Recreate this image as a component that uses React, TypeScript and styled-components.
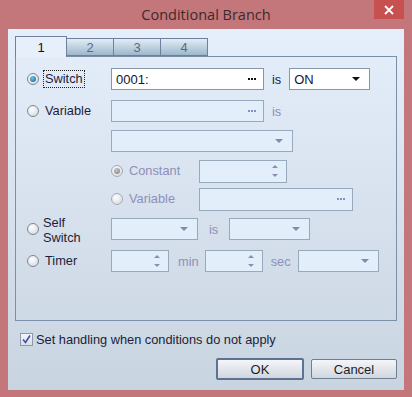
import React from 'react'
import styled, { createGlobalStyle } from 'styled-components'

const GlobalStyle = createGlobalStyle`
  html, body {
    margin: 0;
    padding: 0;
    width: 412px;
    height: 397px;
    overflow: hidden;
    background: #c4777b;
  }
  body {
    font-family: 'Liberation Sans', Arial, sans-serif;
    font-size: 12.8px;
    color: #1d1d3a;
  }
`

const Window = styled.div`
  width: 412px;
  height: 397px;
  display: flex;
  flex-direction: column;
  background: #c4777b;
`

const TitleBar = styled.div`
  height: 29px;
  position: relative;
  display: flex;
  justify-content: center;
  align-items: center;
  font-family: 'Open Sans', 'Noto Sans', sans-serif;
  font-size: 14.5px;
  color: #3a2a2c;
  padding-bottom: 1px;
  box-sizing: border-box;
`

const CloseButton = styled.div`
  position: absolute;
  right: 8px;
  top: 0;
  width: 30px;
  height: 19px;
  background: #c75050;
  display: flex;
  align-items: center;
  justify-content: center;
`

const Client = styled.div`
  margin: 0 8px 7px 8px;
  flex: 1;
  background: linear-gradient(#e5effb, #c8d4e0);
  display: flex;
  flex-direction: column;
  padding: 7px 7px 0 7px;
`

const TabStrip = styled.div`
  display: flex;
  align-items: flex-end;
  height: 20px;
  position: relative;
  z-index: 1;
`

const Tab = styled.div<{ $active?: boolean }>`
  box-sizing: border-box;
  width: ${(p) => (p.$active ? 52 : 48)}px;
  height: ${(p) => (p.$active ? 21 : 18)}px;
  margin-bottom: ${(p) => (p.$active ? -1 : 0)}px;
  margin-left: ${(p) => (p.$active ? 0 : -1)}px;
  border: 1px solid #6e809d;
  border-bottom: ${(p) => (p.$active ? 'none' : '1px solid #6e809d')};
  background: ${(p) => (p.$active ? '#e7f0fa' : 'linear-gradient(#e2ecf5, #9db8cb)')};
  color: ${(p) => (p.$active ? '#111' : '#5b6a80')};
  display: flex;
  justify-content: center;
  align-items: center;
  font-size: 13px;
  padding-top: ${(p) => (p.$active ? 0 : 1)}px;
  &:first-child {
    margin-left: 0;
  }
`

const Panel = styled.div`
  box-sizing: border-box;
  width: 382px;
  height: 265px;
  border: 1px solid #7b8fab;
  display: flex;
  flex-direction: column;
  padding: 11px 0 0 11px;
`

const Row = styled.div<{ $top: number; $indent?: number }>`
  display: flex;
  align-items: center;
  margin-top: ${(p) => p.$top}px;
  margin-left: ${(p) => p.$indent || 0}px;
  height: 22px;
`

const OptionCell = styled.div<{ $width: number }>`
  width: ${(p) => p.$width}px;
  display: flex;
  align-items: center;
  flex-shrink: 0;
`

const Radio = styled.span<{ $checked?: boolean; $disabled?: boolean }>`
  box-sizing: border-box;
  width: 12px;
  height: 12px;
  border-radius: 50%;
  border: 1px solid ${(p) => (p.$disabled ? '#a7adb6' : '#7e8792')};
  background: radial-gradient(circle at 40% 35%, #ffffff, #d8dce2 80%);
  display: inline-flex;
  align-items: center;
  justify-content: center;
  flex-shrink: 0;
  &::after {
    content: '';
    display: ${(p) => (p.$checked ? 'block' : 'none')};
    width: 6px;
    height: 6px;
    border-radius: 50%;
    background: ${(p) =>
      p.$disabled
        ? 'radial-gradient(circle at 40% 35%, #c8c8c8, #7c7c7c)'
        : 'radial-gradient(circle at 40% 35%, #6fc3f0, #0b5c96)'};
  }
`

const Label = styled.span<{ $disabled?: boolean; $focus?: boolean }>`
  margin-left: 4px;
  color: ${(p) => (p.$disabled ? '#8d8fba' : '#1d1d3a')};
  line-height: 14px;
  padding: 1px 1px;
  border: 1px dotted ${(p) => (p.$focus ? '#222' : 'transparent')};
`

const Field = styled.div<{ $width: number; $disabled?: boolean; $height?: number }>`
  box-sizing: border-box;
  width: ${(p) => p.$width}px;
  height: ${(p) => p.$height || 22}px;
  border: 1px solid ${(p) => (p.$disabled ? '#98a9bb' : '#8796a8')};
  background: ${(p) => (p.$disabled ? '#e3eefb' : '#ffffff')};
  display: flex;
  align-items: center;
  padding: 0 5px 0 4px;
  flex-shrink: 0;
  color: #141438;
`

const FieldText = styled.span`
  flex: 1;
  font-size: 13px;
`

const Dots = styled.span<{ $disabled?: boolean }>`
  display: flex;
  gap: 1px;
  margin-right: 2px;
  & > i {
    width: 2px;
    height: 2px;
    background: ${(p) => (p.$disabled ? '#8d8fba' : '#111')};
  }
`

const Arrow = styled.span<{ $disabled?: boolean }>`
  width: 0;
  height: 0;
  border-left: 4px solid transparent;
  border-right: 4px solid transparent;
  border-top: 4px solid ${(p) => (p.$disabled ? '#8587ad' : '#111')};
  margin-right: 4px;
`

const Spinner = styled.span`
  display: flex;
  flex-direction: column;
  gap: 6px;
  margin-right: 3px;
  & > i:first-child {
    border-bottom: 3px solid #8a8cb0;
    border-top: none;
  }
  & > i {
    width: 0;
    height: 0;
    border-left: 3px solid transparent;
    border-right: 3px solid transparent;
    border-top: 3px solid #8a8cb0;
  }
`

const InlineWord = styled.span<{ $disabled?: boolean; $left: number; $right: number }>`
  margin-left: ${(p) => p.$left}px;
  margin-right: ${(p) => p.$right}px;
  color: ${(p) => (p.$disabled ? '#8d8fba' : '#1d1d3a')};
`

const TwoLine = styled.span`
  margin-left: 4px;
  line-height: 15px;
  padding-top: 1px;
`

const CheckRow = styled.label`
  display: flex;
  align-items: center;
  margin-top: 12px;
  margin-left: 5px;
  height: 13px;
`

const CheckBox = styled.span`
  box-sizing: border-box;
  width: 13px;
  height: 13px;
  border: 1px solid #8f98a6;
  background: linear-gradient(#f4f6f9, #d9dee5);
  display: flex;
  align-items: center;
  justify-content: center;
  margin-right: 3px;
`

const ButtonRow = styled.div`
  display: flex;
  justify-content: flex-end;
  gap: 7px;
  margin-top: 12px;
  align-items: center;
`

const Button = styled.button<{ $default?: boolean }>`
  box-sizing: border-box;
  width: ${(p) => (p.$default ? 88 : 86)}px;
  height: ${(p) => (p.$default ? 22 : 20)}px;
  border: ${(p) => (p.$default ? '2px solid #5e7190' : '1px solid #717e90')};
  border-radius: 2px;
  background: linear-gradient(#f4f6f9, #d0d7df);
  font-family: 'Liberation Sans', Arial, sans-serif;
  font-size: 13px;
  color: #1d1d2a;
  padding: 0;
`

const Switch = () => (
  <Row $top={0}>
    <OptionCell $width={84}>
      <Radio $checked />
      <Label $focus>Switch</Label>
    </OptionCell>
    <Field $width={153}>
      <FieldText>0001:</FieldText>
      <Dots>
        <i />
        <i />
        <i />
      </Dots>
    </Field>
    <InlineWord $left={8} $right={8}>is</InlineWord>
    <Field $width={81}>
      <FieldText>ON</FieldText>
      <Arrow />
    </Field>
  </Row>
)

export default function App() {
  return (
    <>
      <GlobalStyle />
      <Window>
        <TitleBar>
          Conditional Branch
          <CloseButton>
            <svg width="10" height="10" viewBox="0 0 10 10">
              <path d="M1 1 L9 9 M9 1 L1 9" stroke="#fff" strokeWidth="1.8" />
            </svg>
          </CloseButton>
        </TitleBar>
        <Client>
          <TabStrip>
            <Tab $active>1</Tab>
            <Tab>2</Tab>
            <Tab>3</Tab>
            <Tab>4</Tab>
          </TabStrip>
          <Panel>
            <Switch />
            <Row $top={10}>
              <OptionCell $width={84}>
                <Radio />
                <Label>Variable</Label>
              </OptionCell>
              <Field $width={153} $disabled>
                <FieldText />
                <Dots $disabled>
                  <i />
                  <i />
                  <i />
                </Dots>
              </Field>
              <InlineWord $disabled $left={8} $right={8}>
                is
              </InlineWord>
            </Row>
            <Row $top={8} $indent={84}>
              <Field $width={182} $disabled>
                <FieldText />
                <Arrow $disabled />
              </Field>
            </Row>
            <Row $top={8} $indent={84}>
              <OptionCell $width={88}>
                <Radio $checked $disabled />
                <Label $disabled>Constant</Label>
              </OptionCell>
              <Field $width={88} $disabled $height={23}>
                <FieldText />
                <Spinner>
                  <i />
                  <i />
                </Spinner>
              </Field>
            </Row>
            <Row $top={6} $indent={84}>
              <OptionCell $width={88}>
                <Radio $disabled />
                <Label $disabled>Variable</Label>
              </OptionCell>
              <Field $width={154} $disabled $height={23}>
                <FieldText />
                <Dots $disabled>
                  <i />
                  <i />
                  <i />
                </Dots>
              </Field>
            </Row>
            <Row $top={8}>
              <OptionCell $width={84}>
                <Radio />
                <TwoLine>
                  Self
                  <br />
                  Switch
                </TwoLine>
              </OptionCell>
              <Field $width={87} $disabled>
                <FieldText />
                <Arrow $disabled />
              </Field>
              <InlineWord $disabled $left={11} $right={11}>
                is
              </InlineWord>
              <Field $width={81} $disabled>
                <FieldText />
                <Arrow $disabled />
              </Field>
            </Row>
            <Row $top={10}>
              <OptionCell $width={84}>
                <Radio />
                <Label>Timer</Label>
              </OptionCell>
              <Field $width={58} $disabled>
                <FieldText />
                <Spinner>
                  <i />
                  <i />
                </Spinner>
              </Field>
              <InlineWord $disabled $left={9} $right={6}>
                min
              </InlineWord>
              <Field $width={58} $disabled>
                <FieldText />
                <Spinner>
                  <i />
                  <i />
                </Spinner>
              </Field>
              <InlineWord $disabled $left={8} $right={7}>
                sec
              </InlineWord>
              <Field $width={81} $disabled>
                <FieldText />
                <Arrow $disabled />
              </Field>
            </Row>
          </Panel>
          <CheckRow>
            <CheckBox>
              <svg width="9" height="9" viewBox="0 0 9 9">
                <path d="M1 4.5 L3.5 7.5 L8 0.5" stroke="#3d4fa6" strokeWidth="1.6" fill="none" />
              </svg>
            </CheckBox>
            Set handling when conditions do not apply
          </CheckRow>
          <ButtonRow>
            <Button $default>OK</Button>
            <Button>Cancel</Button>
          </ButtonRow>
        </Client>
      </Window>
    </>
  )
}
